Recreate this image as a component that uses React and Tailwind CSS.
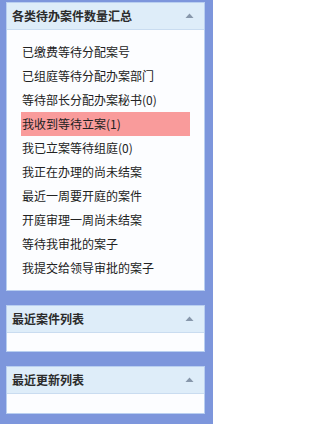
import React from "react";

const FONT = { fontFamily: "'Noto Sans CJK SC', 'Liberation Sans', sans-serif" };

const ITEMS = [
  { label: "已缴费等待分配案号" },
  { label: "已组庭等待分配办案部门" },
  { label: "等待部长分配办案秘书(0)" },
  { label: "我收到等待立案(1)", hot: true },
  { label: "我已立案等待组庭(0)" },
  { label: "我正在办理的尚未结案" },
  { label: "最近一周要开庭的案件" },
  { label: "开庭审理一周尚未结案" },
  { label: "等待我审批的案子" },
  { label: "我提交给领导审批的案子" },
];

const Caret = () => (
  <svg width="9" height="6" viewBox="0 0 9 6" className="mr-[10px]">
    <path d="M4.5 0.5 L8.5 5 L0.5 5 Z" fill="#8797ab" />
  </svg>
);

const Panel = ({ title, children, bodyClass }) => (
  <div className="border border-[#b9cff0] bg-[#fcfdff]">
    <div className="h-[27px] flex items-center justify-between pl-[5px] bg-[#deedf9] border-b border-[#c9dcf0]">
      <span className="text-[12px] font-bold text-[#2b2b2b] leading-none">{title}</span>
      <Caret />
    </div>
    <div className={bodyClass}>{children}</div>
  </div>
);

export default function App() {
  return (
    <div className="w-[213px] h-[424px] bg-[#7d96dc] pt-[2px] pl-[6px] pr-[8px] flex flex-col gap-[14px] overflow-hidden" style={FONT}>
      <Panel title="各类待办案件数量汇总" bodyClass="h-[260px] pt-[10px] pl-[14px]">
        {ITEMS.map(({ label, hot }) => (
          <div
            key={label}
            className={`w-[169px] h-[24px] flex items-center pl-[1px] text-[12px] text-[#222] leading-none ${hot ? "bg-[#f99b9b]" : ""}`}
          >
            {label}
          </div>
        ))}
      </Panel>
      <Panel title="最近案件列表" bodyClass="h-[18px]" />
      <Panel title="最近更新列表" bodyClass="h-[19px]" />
    </div>
  );
}
